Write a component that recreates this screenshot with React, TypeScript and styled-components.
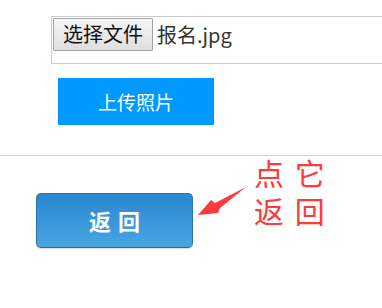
import React from "react";
import styled, { createGlobalStyle } from "styled-components";

const Global = createGlobalStyle`
  html, body {
    margin: 0;
    padding: 0;
    background: #ffffff;
    overflow: hidden;
    font-family: "Noto Sans CJK SC", "Noto Sans", sans-serif;
  }
`;

const Page = styled.div`
  width: 382px;
  height: 308px;
  overflow: hidden;
`;

const Form = styled.div`
  display: flex;
  flex-direction: column;
  padding: 16px 0 0 51px;
`;

const FileBox = styled.div`
  box-sizing: border-box;
  width: 380px;
  height: 48px;
  border: 1px solid #cccccc;
  padding: 1px;
  display: flex;
  align-items: flex-start;
  gap: 4px;
`;

const PickButton = styled.div`
  box-sizing: border-box;
  width: 100px;
  height: 33px;
  border: 1px solid #a3a3a3;
  border-radius: 1px;
  background: linear-gradient(#f6f6f6, #dedede);
  color: #111;
  font-size: 20px;
  line-height: 30px;
  text-align: center;
`;

const FileName = styled.span`
  font-size: 20px;
  line-height: 33px;
  color: #333;
`;

const UploadButton = styled.div`
  margin: 14px 0 0 7px;
  width: 156px;
  height: 47px;
  background: #0099ff;
  color: #ffffff;
  font-size: 19px;
  line-height: 47px;
  text-align: center;
`;

const Divider = styled.div`
  margin-top: 30px;
  border-top: 1px solid #d2d2d2;
`;

const BottomRow = styled.div`
  display: flex;
  align-items: flex-start;
  padding-left: 36px;
`;

const BackButton = styled.div`
  box-sizing: border-box;
  margin-top: 37px;
  width: 157px;
  height: 55px;
  border: 1px solid #2f74ad;
  border-bottom-color: #2a6698;
  border-radius: 5px;
  background: linear-gradient(#2a87d2, #47a6e1);
  box-shadow: 0 1px 1px rgba(0, 0, 0, 0.15);
  color: #ffffff;
  font-size: 22px;
  font-weight: 700;
  line-height: 52px;
  word-spacing: 2px;
  text-align: center;
`;

const Arrow = styled.svg`
  margin: 29px 0 0 3px;
  flex: none;
`;

const Note = styled.div`
  margin: -3px 0 0 4px;
  color: #ff3a3a;
  font-size: 30px;
  line-height: 38px;
  word-spacing: 4px;
`;

export default function App() {
  return (
    <Page>
      <Global />
      <Form>
        <FileBox>
          <PickButton>选择文件</PickButton>
          <FileName>报名.jpg</FileName>
        </FileBox>
        <UploadButton>上传照片</UploadButton>
      </Form>
      <Divider />
      <BottomRow>
        <BackButton>返 回</BackButton>
        <Arrow width="54" height="34" viewBox="196 183 54 34">
          <polygon
            points="198,213 211,198 215,201 246,185 220,206 218,211"
            fill="#ff3a3a"
          />
        </Arrow>
        <Note>
          点 它
          <br />
          返 回
        </Note>
      </BottomRow>
    </Page>
  );
}
